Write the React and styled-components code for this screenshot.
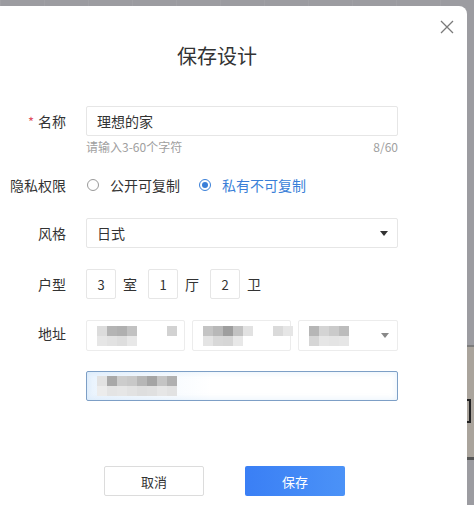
import React from 'react'
import styled, { createGlobalStyle } from 'styled-components'

const GlobalStyle = createGlobalStyle`
  html, body {
    margin: 0;
    padding: 0;
    background: #9c9ca1;
  }
  * {
    box-sizing: border-box;
  }
`

const FONT = `"Noto Sans CJK SC", "Noto Sans", sans-serif`

const mosaics = {
  province: [
    ['#dcdcdc', '#b4b4b4', '#b0b0b0', '#c2c2c2', null, null, null, '#d2d2d2'],
    ['#e6e6e6', '#e2e2e2', '#dedede', '#e8e8e8'],
  ],
  city: [
    ['#c4c4c4', '#b8b8b8', '#9e9e9e', '#c2c2c2', '#e2e2e2', null, null, '#dadada', '#e6e6e6'],
    ['#e4e4e4', '#d8d8d8', '#d6d6d6', '#e8e8e8'],
  ],
  district: [
    ['#b6b6b6', '#d4d4d4', '#cacaca', '#bcbcbc'],
    ['#d6d6d6', '#e6e6e6', '#e4e4e4', '#e6e6e6'],
  ],
  detail: [
    ['#e2e2e2', '#a8a8a8', '#cccccc', '#c8c8c8', '#b6b6b6', '#a4a4a4', '#c4c4c4', '#b0b0b0'],
    ['#ececec', '#e4e4e4', '#e6e6e6', '#e2e2e2', '#dedede', '#e0e0e0', '#e6e6e6', '#e2e2e2'],
  ],
}

const Mosaic = ({ rows }) => (
  <MosaicGrid>
    {rows.map((row, i) => (
      <MosaicRow key={i}>
        {row.map((c, j) => (
          <Cell key={j} style={{ background: c || 'transparent' }} />
        ))}
      </MosaicRow>
    ))}
  </MosaicGrid>
)

const Caret = () => (
  <CaretIcon width="8" height="5" viewBox="0 0 8 5">
    <path d="M0 0 L8 0 L4 5 Z" fill="#333" />
  </CaretIcon>
)

const App = () => {
  return (
    <>
      <GlobalStyle />
      <Page>
        <Dialog>
          <Close aria-label="close">
            <svg width="14" height="14" viewBox="0 0 14 14">
              <path d="M1 1 L13 13 M13 1 L1 13" stroke="#7a7a7a" strokeWidth="1.3" fill="none" />
            </svg>
          </Close>
          <Title>保存设计</Title>

          <Form>
            <Row $mt={36}>
              <Label><Star>*</Star>名称</Label>
              <Field>
                <Input>理想的家</Input>
                <Hint>
                  <span>请输入3-60个字符</span>
                  <span>8/60</span>
                </Hint>
              </Field>
            </Row>

            <Row $mt={16} $center>
              <Label>隐私权限</Label>
              <Radios>
                <RadioItem>
                  <Radio />
                  公开可复制
                </RadioItem>
                <RadioItem $active>
                  <Radio $checked />
                  私有不可复制
                </RadioItem>
              </Radios>
            </Row>

            <Row $mt={18} $center>
              <Label>风格</Label>
              <Select>
                日式
                <Caret />
              </Select>
            </Row>

            <Row $mt={21} $center>
              <Label>户型</Label>
              <Rooms>
                <NumBox>3</NumBox>
                <Unit>室</Unit>
                <NumBox>1</NumBox>
                <Unit>厅</Unit>
                <NumBox>2</NumBox>
                <Unit>卫</Unit>
              </Rooms>
            </Row>

            <Row $mt={21}>
              <Label $tight>地址</Label>
              <AddressGroup>
                <AddrSelect><Mosaic rows={mosaics.province} /></AddrSelect>
                <AddrSelect><Mosaic rows={mosaics.city} /></AddrSelect>
                <AddrSelect>
                  <Mosaic rows={mosaics.district} />
                  <Caret />
                </AddrSelect>
              </AddressGroup>
            </Row>

            <Row $mt={20} $center>
              <Label />
              <DetailInput>
                <Mosaic rows={mosaics.detail} />
              </DetailInput>
            </Row>
          </Form>

          <Footer>
            <CancelButton>取消</CancelButton>
            <SaveButton>保存</SaveButton>
          </Footer>
        </Dialog>

        <Side>
          <SidePhoto>
            <SideMark />
          </SidePhoto>
        </Side>
      </Page>
    </>
  )
}

export default App

const Page = styled.div`
  width: 474px;
  height: 505px;
  display: flex;
  align-items: flex-start;
  overflow: hidden;
  font-family: ${FONT};
  background:
    repeating-linear-gradient(90deg, rgba(255,255,255,0.05) 0 1px, transparent 1px 44px),
    #9c9ca1;
`

const Dialog = styled.div`
  position: relative;
  width: 467px;
  height: 499px;
  margin-top: 6px;
  background: #fff;
  border-top-right-radius: 8px;
  display: flex;
  flex-direction: column;
`

const Close = styled.div`
  position: absolute;
  top: 14px;
  right: 13px;
  width: 14px;
  height: 14px;
  display: flex;
  cursor: pointer;
`

const Title = styled.div`
  margin-top: 36px;
  text-align: center;
  font-size: 20px;
  line-height: 28px;
  color: #333;
  margin-right: 33px;
`

const Form = styled.div`
  display: flex;
  flex-direction: column;
`

const Row = styled.div`
  display: flex;
  align-items: ${p => (p.$center ? 'center' : 'flex-start')};
  margin-top: ${p => p.$mt}px;
`

const Label = styled.div`
  width: 66px;
  flex-shrink: 0;
  margin-right: 20px;
  text-align: right;
  font-size: 14px;
  line-height: ${p => (p.$tight ? '26px' : '30px')};
  color: #333;
  white-space: nowrap;
`

const Star = styled.span`
  color: #e05060;
  margin-right: 4px;
  font-size: 13px;
`

const Field = styled.div`
  width: 312px;
  display: flex;
  flex-direction: column;
`

const BoxBase = styled.div`
  height: 30px;
  border: 1px solid #e6e6e6;
  border-radius: 2px;
  background: #fff;
  font-size: 14px;
  color: #333;
  display: flex;
  align-items: center;
`

const Input = styled(BoxBase)`
  width: 312px;
  padding-left: 10px;
`

const Hint = styled.div`
  display: flex;
  justify-content: space-between;
  margin-top: 4px;
  font-size: 12px;
  line-height: 14px;
  color: #a0a0a0;
`

const Radios = styled.div`
  display: flex;
  align-items: center;
  height: 30px;
  gap: 18px;
`

const RadioItem = styled.label`
  display: flex;
  align-items: center;
  gap: 11px;
  font-size: 14px;
  color: ${p => (p.$active ? '#3a7fd8' : '#333')};
`

const Radio = styled.span`
  width: 12px;
  height: 12px;
  border-radius: 50%;
  border: 1px solid ${p => (p.$checked ? '#3a7fd8' : '#999')};
  display: flex;
  align-items: center;
  justify-content: center;
  margin-left: 1px;

  &::after {
    content: '';
    width: 6px;
    height: 6px;
    border-radius: 50%;
    background: ${p => (p.$checked ? '#3a7fd8' : 'transparent')};
  }
`

const Select = styled(BoxBase)`
  width: 312px;
  padding: 0 9px 0 10px;
  justify-content: space-between;
`

const CaretIcon = styled.svg`
  flex-shrink: 0;
`

const Rooms = styled.div`
  display: flex;
  align-items: center;
`

const NumBox = styled(BoxBase)`
  width: 30px;
  justify-content: center;
  font-size: 13px;
`

const Unit = styled.span`
  width: 32px;
  padding-left: 7px;
  font-size: 14px;
  color: #333;
`

const AddressGroup = styled.div`
  width: 312px;
  display: grid;
  grid-template-columns: 99px 99px 100px;
  justify-content: space-between;
`

const AddrSelect = styled(BoxBase)`
  height: 31px;
  padding: 0 8px 0 10px;
  justify-content: space-between;
  border-color: #ececec;

  svg path {
    fill: #888;
  }
`

const DetailInput = styled(BoxBase)`
  width: 312px;
  padding-left: 10px;
  border-color: #7d9fc6;
  box-shadow: inset 0 0 6px rgba(140, 190, 240, 0.25);
  background: linear-gradient(90deg, rgba(220, 236, 252, 0.6), #fff 40%);
`

const MosaicGrid = styled.div`
  display: flex;
  flex-direction: column;
`

const MosaicRow = styled.div`
  display: flex;
  height: 10px;
`

const Cell = styled.span`
  width: 10px;
  height: 10px;
`

const Footer = styled.div`
  margin-top: auto;
  margin-bottom: 9px;
  display: flex;
  justify-content: center;
  gap: 41px;
  padding-right: 18px;
`

const ButtonBase = styled.button`
  width: 100px;
  height: 30px;
  border-radius: 2px;
  font-family: ${FONT};
  font-size: 13px;
  cursor: pointer;
`

const CancelButton = styled(ButtonBase)`
  background: #fff;
  border: 1px solid #dcdcdc;
  color: #333;
`

const SaveButton = styled(ButtonBase)`
  border: none;
  color: #fff;
  background: linear-gradient(90deg, #3a7ff5, #4b92f7);
`

const Side = styled.div`
  width: 7px;
  height: 505px;
  display: flex;
  flex-direction: column;
  padding-top: 345px;
`

const SidePhoto = styled.div`
  height: 115px;
  border-top: 2px solid #7c7c7c;
  border-bottom: 3px solid #555;
  background: #aaa49c;
  overflow: hidden;
  padding-top: 52px;
`

const SideMark = styled.div`
  width: 4px;
  height: 24px;
  border-right: 2px solid #222;
  border-top: 2px solid #222;
  border-bottom: 2px solid #222;
`
